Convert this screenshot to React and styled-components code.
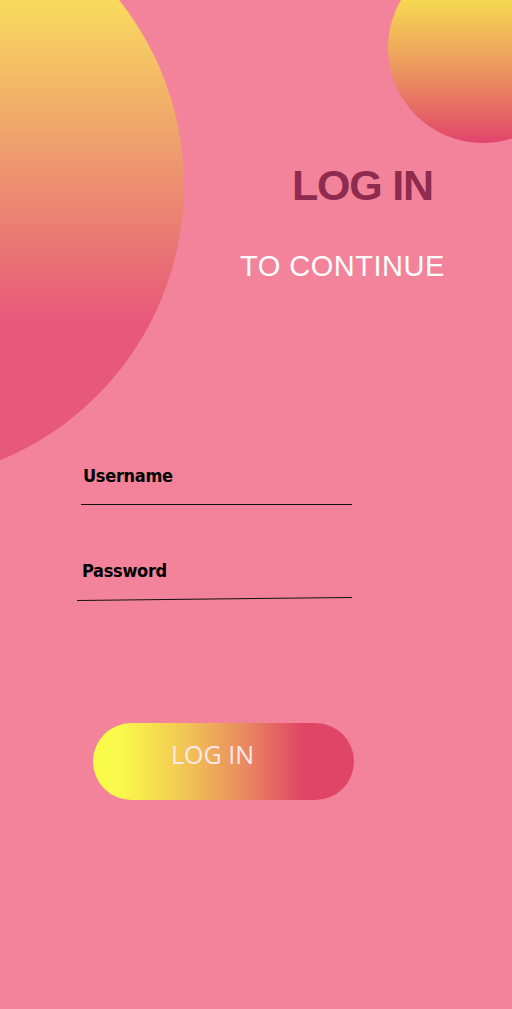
import React from 'react'
import styled, { createGlobalStyle } from 'styled-components'

const GlobalStyle = createGlobalStyle`
  html, body {
    margin: 0;
    padding: 0;
    background: #f3839a;
  }
`

const Page = styled.div`
  position: relative;
  width: 512px;
  height: 1009px;
  overflow: hidden;
  background: #f3839a;
  display: flex;
  flex-direction: column;
`

// decorative blobs sit behind the content
const Blob = styled.div`
  position: absolute;
  left: ${p => p.x}px;
  top: ${p => p.y}px;
  width: ${p => p.size}px;
  height: ${p => p.size}px;
  border-radius: 50%;
  background: ${p => p.fill};
`

const Content = styled.div`
  position: relative;
  display: flex;
  flex-direction: column;
  padding-top: 163px;
`

const Title = styled.h1`
  margin: 0 0 0 292px;
  font-family: 'Liberation Sans', Arial, sans-serif;
  font-weight: 700;
  font-size: 43px;
  line-height: 44px;
  letter-spacing: -1.2px;
  color: #8e2b4f;
`

const Subtitle = styled.h2`
  margin: 45px 0 0 240px;
  font-family: 'Liberation Sans', Arial, sans-serif;
  font-weight: 400;
  font-size: 29px;
  line-height: 29px;
  letter-spacing: 0.5px;
  color: #ffffff;
`

const Form = styled.form`
  display: flex;
  flex-direction: column;
  margin: 185px 0 0 0;
`

const Field = styled.div`
  display: flex;
  flex-direction: column;
  margin-left: ${p => p.indent}px;
  margin-top: ${p => p.gap}px;
  width: ${p => p.width}px;
`

const Label = styled.label`
  font-family: 'DejaVu Sans Condensed', 'DejaVu Sans', sans-serif;
  font-weight: 700;
  font-size: 18px;
  line-height: 20px;
  color: #000;
  padding-left: ${p => p.pad}px;
  letter-spacing: -0.3px;
`

const Input = styled.input`
  height: ${p => p.h}px;
  border: none;
  border-bottom: 1px solid #111;
  background: transparent;
  outline: none;
  padding: 0;
  transform: rotate(${p => p.tilt || 0}deg);
  transform-origin: right center;
`

const Button = styled.button`
  margin: 125px 0 0 93px;
  width: 261px;
  height: 77px;
  border: none;
  border-radius: 39px;
  background: linear-gradient(90deg, #fafa4a 10%, #f2c654 35%, #e98a60 58%, #e04566 80%);
  display: flex;
  align-items: center;
  justify-content: center;
  padding: 0 22px 16px 0;
  font-family: 'Open Sans', 'Noto Sans', sans-serif;
  font-size: 25px;
  font-weight: 400;
  color: #fbe7ec;
  cursor: pointer;
`

export default function App() {
  return (
    <>
      <GlobalStyle />
      <Page>
        <Blob
          x={-411}
          y={-112}
          size={595}
          fill="linear-gradient(180deg, #f8da5e 19%, #ee9a6e 45%, #e7587a 73%)"
        />
        <Blob
          x={388}
          y={-47}
          size={190}
          fill="linear-gradient(180deg, #f6d852 25%, #ec9560 62%, #e1456b 100%)"
        />
        <Content>
          <Title>LOG IN</Title>
          <Subtitle>TO CONTINUE</Subtitle>
          <Form onSubmit={e => e.preventDefault()}>
            <Field indent={81} gap={0} width={271}>
              <Label pad={2}>Username</Label>
              <Input type="text" h={18} />
            </Field>
            <Field indent={77} gap={56} width={275}>
              <Label pad={5}>Password</Label>
              <Input type="password" h={16} tilt={-0.6} />
            </Field>
            <Button type="submit">LOG IN</Button>
          </Form>
        </Content>
      </Page>
    </>
  )
}
